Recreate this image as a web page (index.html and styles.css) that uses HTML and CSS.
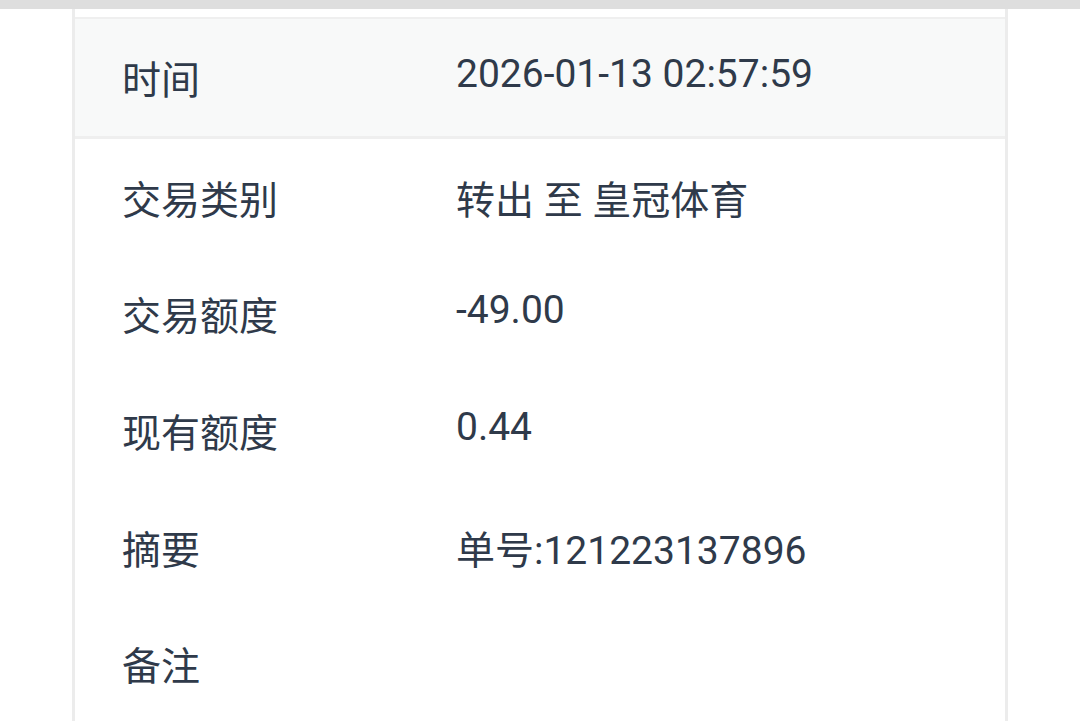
FILE: index.html
```html
<!DOCTYPE html>
<html lang="zh-CN">
<head>
<meta charset="utf-8">
<title>交易详情</title>
<link rel="stylesheet" href="styles.css">
</head>
<body>
<div class="topbar"></div>
<div class="card">
  <div class="row row-head">
    <div class="label">时间</div>
    <div class="value value-num">2026-01-13 02:57:59</div>
  </div>
  <div class="row">
    <div class="label">交易类别</div>
    <div class="value">转出 至 皇冠体育</div>
  </div>
  <div class="row">
    <div class="label">交易额度</div>
    <div class="value value-num">-49.00</div>
  </div>
  <div class="row">
    <div class="label">现有额度</div>
    <div class="value value-num">0.44</div>
  </div>
  <div class="row">
    <div class="label">摘要</div>
    <div class="value">单号:121223137896</div>
  </div>
  <div class="row">
    <div class="label">备注</div>
    <div class="value"></div>
  </div>
</div>
</body>
</html>
```

FILE: styles.css
```css
html, body {
  margin: 0;
  padding: 0;
  background: #ffffff;
  height: 100%;
  overflow: hidden;
}

body {
  font-family: Roboto, "Noto Sans CJK SC", sans-serif;
  font-size: 39px;
  color: #2f3a4a;
}

.topbar {
  height: 9px;
  background: #dedede;
}

.card {
  margin-left: 72px;
  width: 930px;
  border-left: 3px solid #ececec;
  border-right: 3px solid #ececec;
  padding-top: 8px;
  min-height: 712px;
}

.row {
  display: grid;
  grid-template-columns: 381px 1fr;
  align-items: start;
}

.row-head {
  background: #f8f9f9;
  border-top: 2px solid #efefef;
  border-bottom: 3px solid #efefef;
}

.label,
.value {
  padding: 30.3px 0;
  line-height: normal;
  white-space: nowrap;
}

.label {
  padding-left: 47px;
}

.value-num {
  padding-top: 32.3px;
}
```
